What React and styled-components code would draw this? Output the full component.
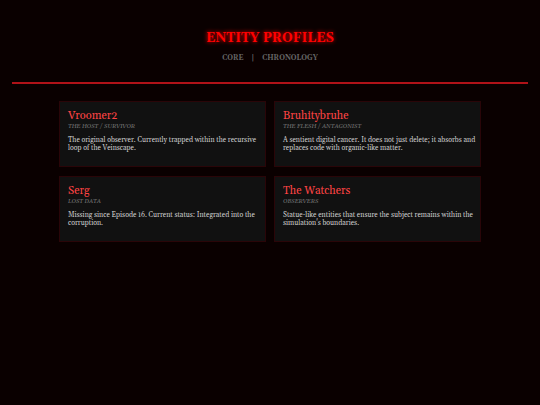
import React from 'react'
import styled, { createGlobalStyle } from 'styled-components'

const profiles = [
  {
    name: 'Vroomer2',
    role: 'THE HOST / SURVIVOR',
    text: 'The original observer. Currently trapped within the recursive loop of the Veinscape.',
  },
  {
    name: 'Bruhitybruhe',
    role: 'THE FLESH / ANTAGONIST',
    text: 'A sentient digital cancer. It does not just delete; it absorbs and replaces code with organic-like matter.',
  },
  {
    name: 'Serg',
    role: 'LOST DATA',
    text: 'Missing since Episode 16. Current status: Integrated into the corruption.',
  },
  {
    name: 'The Watchers',
    role: 'OBSERVERS',
    text: "Statue-like entities that ensure the subject remains within the simulation's boundaries.",
  },
]

const App = () => {
  return (
    <>
      <GlobalStyle />
      <SHeader>
        <STitle>ENTITY PROFILES</STitle>
        <SNav>
          <SLink href="#core">CORE</SLink>
          <span>|</span>
          <SLink href="#chronology">CHRONOLOGY</SLink>
        </SNav>
      </SHeader>
      <SGrid>
        {profiles.map((item) => (
          <SCard key={item.name}>
            <SName>{item.name}</SName>
            <SRole>{item.role}</SRole>
            <SText>{item.text}</SText>
          </SCard>
        ))}
      </SGrid>
    </>
  )
}

export default App

const GlobalStyle = createGlobalStyle`
  * {
    box-sizing: border-box;
  }

  body {
    margin: 0;
    padding: 12px;
    background-color: #0a0000;
    color: #cccccc;
    font-family: Georgia, Gelasio, 'Liberation Serif', serif;
  }
`

const SHeader = styled.header`
  padding: 16px 0 20px;
  border-bottom: 2px solid #b01218;
  text-align: center;
`

const STitle = styled.h1`
  margin: 0;
  color: #ff0000;
  font-size: 13px;
  line-height: 20px;
  text-shadow: 0 0 4px #ff0000;
`

const SNav = styled.nav`
  display: flex;
  justify-content: center;
  gap: 8px;
  margin-top: 6px;
  color: #999999;
  font-size: 7px;
  line-height: 8px;
`

const SLink = styled.a`
  color: #666666;
  font-weight: bold;
  text-decoration: none;
`

const SGrid = styled.main`
  display: grid;
  grid-template-columns: 1fr 1fr;
  gap: 9px 8px;
  max-width: 422px;
  margin: 17px auto 0;
`

const SCard = styled.article`
  padding: 8px 4px 14px 8px;
  border: 1px solid #2a0508;
  background-color: #111111;
`

const SName = styled.h2`
  margin: 0;
  color: #ff4444;
  font-size: 11px;
  font-weight: normal;
  line-height: 13px;
`

const SRole = styled.p`
  margin: 0;
  color: #777777;
  font-size: 6px;
  font-style: italic;
  line-height: 7px;
`

const SText = styled.p`
  margin: 6px 0 0;
  font-size: 7px;
  line-height: 8px;
`
